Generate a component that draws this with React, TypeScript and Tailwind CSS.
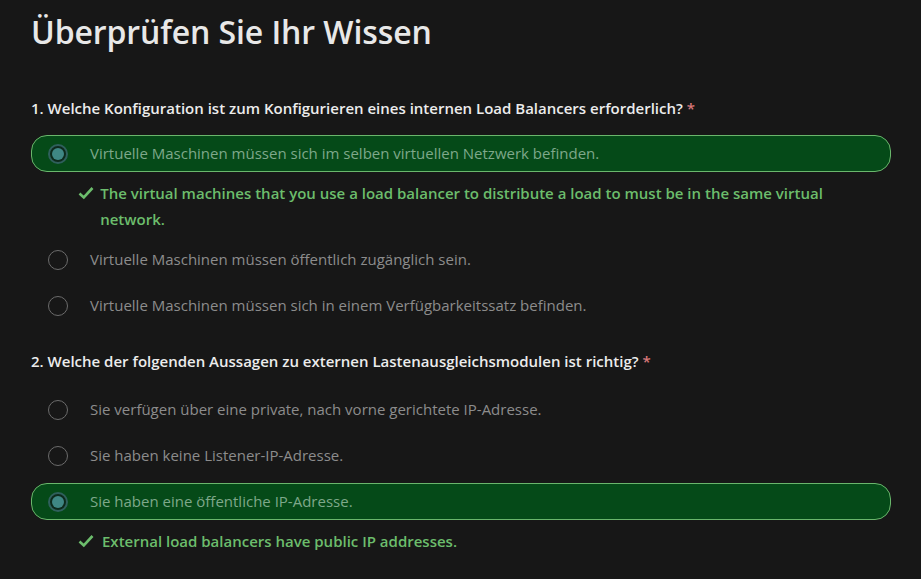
import React from "react";

type Option = { text: string; selected?: boolean; feedback?: string };
type Question = { title: string; options: Option[] };

const questions: Question[] = [
  {
    title: "1. Welche Konfiguration ist zum Konfigurieren eines internen Load Balancers erforderlich?",
    options: [
      {
        text: "Virtuelle Maschinen müssen sich im selben virtuellen Netzwerk befinden.",
        selected: true,
        feedback:
          "The virtual machines that you use a load balancer to distribute a load to must be in the same virtual network.",
      },
      { text: "Virtuelle Maschinen müssen öffentlich zugänglich sein." },
      { text: "Virtuelle Maschinen müssen sich in einem Verfügbarkeitssatz befinden." },
    ],
  },
  {
    title: "2. Welche der folgenden Aussagen zu externen Lastenausgleichsmodulen ist richtig?",
    options: [
      { text: "Sie verfügen über eine private, nach vorne gerichtete IP-Adresse." },
      { text: "Sie haben keine Listener-IP-Adresse." },
      {
        text: "Sie haben eine öffentliche IP-Adresse.",
        selected: true,
        feedback: "External load balancers have public IP addresses.",
      },
    ],
  },
];

function Radio({ checked }: { checked?: boolean }) {
  if (checked) {
    return (
      <span className="flex h-[20px] w-[20px] shrink-0 items-center justify-center rounded-full border-2 border-[#2f5f5c] bg-[#0d2a1c]">
        <span className="h-[12px] w-[12px] rounded-full bg-[#3f8784]" />
      </span>
    );
  }
  return <span className="h-[20px] w-[20px] shrink-0 rounded-full border border-[#6b6b6b]" />;
}

function Check() {
  return (
    <svg width="16" height="14" viewBox="0 0 16 14" className="shrink-0">
      <path d="M1.5 7.5 L5.8 11.5 L14.5 2" fill="none" stroke="#6cbd6c" strokeWidth="2.6" />
    </svg>
  );
}

export default function App() {
  return (
    <div
      className="min-h-[579px] bg-[#171717] pl-[31px] pr-[30px] pt-[10px]"
      style={{ fontFamily: '"Open Sans", "Noto Sans", sans-serif' }}
    >
      <h1 className="text-[32px] font-semibold leading-[44px] tracking-[-0.1px] text-[#e8e8e8]">
        Überprüfen Sie Ihr Wissen
      </h1>
      <div className="mt-[44px] flex flex-col gap-[27px]">
        {questions.map((q, qi) => (
          <div key={qi}>
            <p className="text-[15px] font-semibold leading-[20px] text-[#ececec]">
              {q.title} <span className="text-[#d9787a]">*</span>
            </p>
            <div className={qi === 0 ? "mt-[17px] flex flex-col gap-[9px]" : "mt-[20px] flex flex-col gap-[9px]"}>
              {q.options.map((o, oi) => (
                <div key={oi}>
                  <div
                    className={
                      o.selected
                        ? "flex h-[37px] items-center rounded-[16px] border border-[#6ab66c] bg-[#054a18] pl-[16px]"
                        : "flex h-[37px] items-center border border-transparent pl-[16px]"
                    }
                  >
                    <Radio checked={o.selected} />
                    <span
                      className={
                        o.selected
                          ? "ml-[22px] text-[15px] text-[#7ea88a]"
                          : "ml-[22px] text-[15px] text-[#8c8c8c]"
                      }
                    >
                      {o.text}
                    </span>
                  </div>
                  {o.feedback && (
                    <div className="mt-[8px] flex pl-[47px] pr-[60px]">
                      <span className="mt-[6px] w-[24px]">
                        <Check />
                      </span>
                      <p className="text-[15px] font-semibold leading-[26px] text-[#6cbd6c]">{o.feedback}</p>
                    </div>
                  )}
                </div>
              ))}
            </div>
          </div>
        ))}
      </div>
    </div>
  );
}
